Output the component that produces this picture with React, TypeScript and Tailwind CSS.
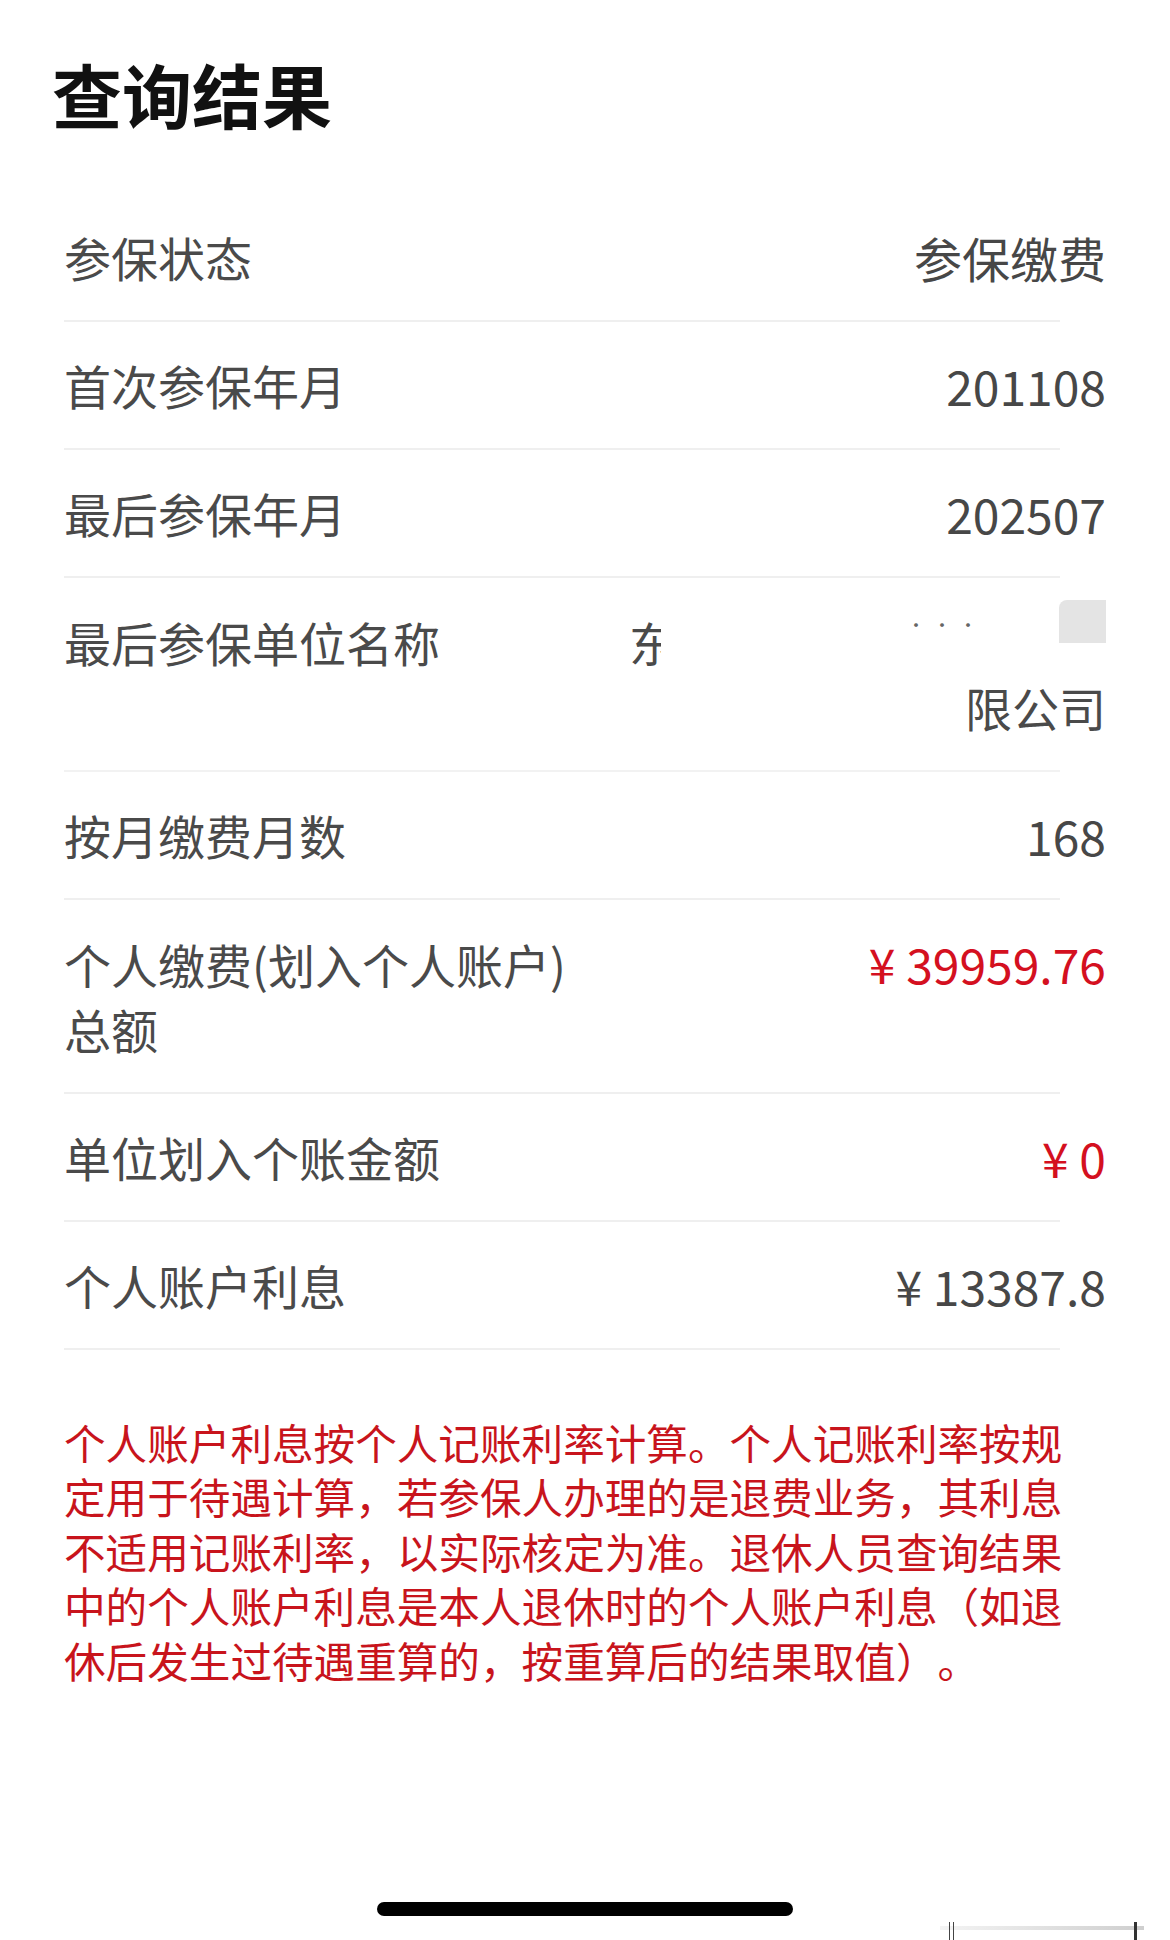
const font = { fontFamily: '"Noto Sans CJK SC", "Noto Sans", sans-serif' }

function Row({
  label,
  value,
  red = false,
  line = true,
}: {
  label: React.ReactNode
  value: React.ReactNode
  red?: boolean
  line?: boolean
}) {
  return (
    <div>
      <div className="flex items-start justify-between py-[31px]">
        <div className="text-[47px] leading-[64px] text-[#4a4a4a]">{label}</div>
        <div
          className={
            red
              ? "text-[48px] leading-[64px] text-[#d4101f]"
              : "text-[48px] leading-[64px] text-[#474747]"
          }
        >
          {value}
        </div>
      </div>
      {line && <div className="mr-[46px] h-[2px] bg-[#efefef]" />}
    </div>
  )
}

export default function App() {
  return (
    <div className="flex h-[1940px] w-[1170px] flex-col bg-white [text-spacing-trim:space-all]" style={font}>
      <h1 className="pl-[52px] pt-[52px] text-[70px] font-bold leading-[84px] text-[#111]">
        查询结果
      </h1>

      <div className="mt-[58px] px-16">
        <Row label="参保状态" value="参保缴费" />
        <Row label="首次参保年月" value="201108" />
        <Row label="最后参保年月" value="202507" />

        {/* company name row, partly blurred in the source */}
        <div>
          <div className="flex items-start py-[31px]">
            <div className="text-[47px] leading-[65px] text-[#4a4a4a]">最后参保单位名称</div>
            <div className="ml-[189px] h-[65px] w-[32px] overflow-hidden text-[47px] leading-[65px] text-[#4a4a4a]">
              东
            </div>
            <div className="flex flex-1 flex-col items-end">
              <div className="flex h-[65px] items-start gap-[80px]">
                <span className="mt-[6px] text-[18px] leading-[18px] tracking-[2px] text-[#666]">· · ·</span>
                <span className="mt-[-9px] h-[43px] w-[47px] rounded-tl-[8px] bg-[#e4e4e4]" />
              </div>
              <div className="text-[47px] leading-[65px] text-[#4a4a4a]">限公司</div>
            </div>
          </div>
          <div className="mr-[46px] h-[2px] bg-[#f2f2f2]" />
        </div>

        <Row label="按月缴费月数" value="168" />
        <Row
          label={
            <div className="leading-[65px]">
              个人缴费(划入个人账户)
              <br />
              总额
            </div>
          }
          value="¥ 39959.76"
          red
        />
        <Row label="单位划入个账金额" value="¥ 0" red />
        <Row label="个人账户利息" value="¥ 13387.8" />
      </div>

      <div className="mt-[65px] px-16 text-[41.6px] leading-[54.4px] text-[#c8141c]">
        <div>个人账户利息按个人记账利率计算。个人记账利率按规</div>
        <div>定用于待遇计算，若参保人办理的是退费业务，其利息</div>
        <div>不适用记账利率，以实际核定为准。退休人员查询结果</div>
        <div>中的个人账户利息是本人退休时的个人账户利息（如退</div>
        <div>休后发生过待遇重算的，按重算后的结果取值）。</div>
      </div>

      <div className="relative mt-auto flex justify-center pb-[24px]">
        <div className="h-[14px] w-[416px] rounded-full bg-black" />
        <div className="absolute bottom-0 left-[940px] h-[18px] w-[204px]">
          <div className="mt-[4px] h-[4px] bg-gradient-to-r from-[#f4f4f4] to-[#cfcfcf]" />
          <div className="absolute left-[9px] top-0 h-[18px] w-[5px] border-x border-[#444]" />
          <div className="absolute left-[194px] top-0 h-[18px] w-[3px] bg-[#333]" />
        </div>
      </div>
    </div>
  )
}
